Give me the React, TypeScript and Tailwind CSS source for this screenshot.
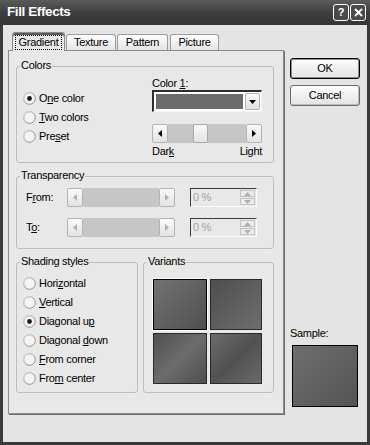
import React from "react";

function Radio({ checked }: { checked?: boolean }) {
  return (
    <svg width="13" height="13" viewBox="0 0 13 13" className="shrink-0">
      <circle cx="6.5" cy="6.5" r="5.8" fill="#f4f4f4" stroke="#939393" strokeWidth="1" />
      <path d="M2.2 9.5 A5 5 0 0 1 9.5 2.2" fill="none" stroke="#d4d4d4" strokeWidth="1.2" />
      {checked && <circle cx="6.5" cy="6.5" r="2.4" fill="#1c1c1c" />}
    </svg>
  );
}

function Tri({ dir, color = "#000" }: { dir: "left" | "right" | "down" | "up"; color?: string }) {
  const pts = {
    left: "4,0 0,3.5 4,7",
    right: "0,0 4,3.5 0,7",
    down: "0,0 7,0 3.5,4",
    up: "0,4 7,4 3.5,0",
  }[dir];
  const w = dir === "left" || dir === "right" ? 4 : 7;
  const h = dir === "left" || dir === "right" ? 7 : 4;
  return (
    <svg width={w} height={h} viewBox={`0 0 ${w} ${h}`}>
      <polygon points={pts} fill={color} />
    </svg>
  );
}

function Group({ label, className, children }: { label: React.ReactNode; className: string; children: React.ReactNode }) {
  return (
    <div className={`relative border border-[#bdbdbd] rounded-[3px] ${className}`}>
      <span className="absolute -top-[8px] left-[3px] px-[1px] bg-[#e8e8e8] leading-[13px]">{label}</span>
      {children}
    </div>
  );
}

function ScrollBtn({ dir, disabled }: { dir: "left" | "right"; disabled?: boolean }) {
  return (
    <div className="w-[16px] h-full shrink-0 flex items-center justify-center bg-gradient-to-b from-[#fbfbfb] to-[#e2e2e2] border border-[#b3b3b3] rounded-[2px]">
      <Tri dir={dir} color={disabled ? "#b0b0b0" : "#000"} />
    </div>
  );
}

function Slider({ disabled, w }: { disabled?: boolean; w: string }) {
  return (
    <div className={`flex h-[19px] ${w}`}>
      <ScrollBtn dir="left" disabled={disabled} />
      <div className="flex-1 bg-[#c6c6c6] flex items-stretch">
        {!disabled && (
          <div className="ml-[25px] w-[15px] bg-gradient-to-b from-[#fafafa] to-[#e4e4e4] border border-[#a9a9a9] rounded-[2px]" />
        )}
      </div>
      <ScrollBtn dir="right" disabled={disabled} />
    </div>
  );
}

function Spin() {
  return (
    <div className="ml-[15px] w-[67px] h-[19px] flex border-t border-l border-[#3c3c3c] border-r border-b border-r-[#fafafa] border-b-[#fafafa] bg-[#e8e8e8]">
      <span className="flex-1 pl-[2px] leading-[17px] text-[#a3a3a3]">0 %</span>
      <div className="w-[16px] flex flex-col gap-[1px] py-[1px] pr-[1px]">
        <div className="flex-1 flex items-center justify-center bg-[#ececec] border border-[#c2c2c2]">
          <Tri dir="up" color="#b0b0b0" />
        </div>
        <div className="flex-1 flex items-center justify-center bg-[#ececec] border border-[#c2c2c2]">
          <Tri dir="down" color="#b0b0b0" />
        </div>
      </div>
    </div>
  );
}

function RadioRow({ checked, children }: { checked?: boolean; children: React.ReactNode }) {
  return (
    <div className="h-[19px] flex items-center gap-[3px]">
      <Radio checked={checked} />
      <span>{children}</span>
    </div>
  );
}

const Tab = ({ children, w, ml }: { children: React.ReactNode; w: string; ml: string }) => (
  <div className={`${w} ${ml} h-[16px] flex items-center justify-center border border-b-0 border-[#9c9c9c] rounded-t-[3px] bg-gradient-to-b from-[#ffffff] to-[#e4e4e4]`}>
    {children}
  </div>
);

export default function App() {
  return (
    <div className="w-[370px] h-[445px] bg-[#3a3a3a] flex flex-col font-['Liberation_Sans',Arial,sans-serif] text-[11px] tracking-[-0.3px] text-black overflow-hidden">
      {/* title bar */}
      <div className="h-[25px] shrink-0 flex items-center pl-[7px] pr-[4px] bg-gradient-to-b from-[#5c5c5c] via-[#3e3e3e] to-[#363636]">
        <span className="text-white font-bold text-[13.5px] tracking-[-0.4px]">Fill Effects</span>
        <div className="ml-auto flex gap-[1px]">
          <div className="w-[16px] h-[17px] flex items-center justify-center border border-white rounded-[3px] bg-[#4a4a4a] text-white font-bold text-[11px]">?</div>
          <div className="w-[16px] h-[17px] flex items-center justify-center border border-white rounded-[3px] bg-[#4a4a4a]">
            <svg width="9" height="9" viewBox="0 0 9 9">
              <path d="M1 1 L8 8 M8 1 L1 8" stroke="#fff" strokeWidth="2" />
            </svg>
          </div>
        </div>
      </div>

      {/* body */}
      <div className="flex-1 mx-[3px] mb-[3px] bg-[#e4e4e4] flex pt-[6px] pl-[5px]">
        <div className="w-[276px] flex flex-col">
          <div className="h-[19px] flex items-end pl-[4px]">
            <div className="relative z-10 -mb-[1px] w-[53px] h-[19px] flex items-center justify-center border border-b-0 border-[#8a8a8a] rounded-t-[3px] bg-[#e8e8e8] shadow-[inset_0_2px_0_#5a5a5a]">
              <span className="px-[3px] leading-[13px] border border-dotted border-black">Gradient</span>
            </div>
            <Tab w="w-[50px]" ml="ml-[1px]">Texture</Tab>
            <Tab w="w-[51px]" ml="ml-[1px]">Pattern</Tab>
            <Tab w="w-[49px]" ml="ml-[2px]">Picture</Tab>
          </div>

          <div className="h-[364px] border border-[#8c8c8c] bg-[#e8e8e8] shadow-[1px_1px_0_#6a6a6a] flex flex-col pt-[15px] pl-[7px] pr-[9px] gap-[13px]">
            <Group label="Colors" className="h-[97px] flex">
              <div className="w-[135px] pl-[6px] pt-[22px] flex flex-col">
                <RadioRow checked>O<u>n</u>e color</RadioRow>
                <RadioRow><u>T</u>wo colors</RadioRow>
                <RadioRow>Pre<u>s</u>et</RadioRow>
              </div>
              <div className="w-[110px] pt-[10px] flex flex-col">
                <span className="leading-[13px]">Color <u>1</u>:</span>
                <div className="h-[22px] flex border-t-2 border-l-2 border-[#2e2e2e] border-r border-b border-r-[#f6f6f6] border-b-[#f6f6f6] bg-white">
                  <div className="flex-1 m-[2px] bg-[#6b6b6b]" />
                  <div className="w-[15px] my-[1px] mr-[1px] flex items-center justify-center bg-gradient-to-b from-[#fafafa] to-[#e0e0e0] border border-[#b3b3b3] rounded-[2px]">
                    <Tri dir="down" />
                  </div>
                </div>
                <div className="mt-[12px]">
                  <Slider w="w-[110px]" />
                </div>
                <div className="mt-[2px] flex justify-between leading-[13px]">
                  <span>Dar<u>k</u></span>
                  <span>Light</span>
                </div>
              </div>
            </Group>

            <Group label="Transparency" className="h-[73px] pt-[11px] pl-[9px] flex flex-col gap-[11px]">
              <div className="flex items-center">
                <span className="w-[41px]">F<u>r</u>om:</span>
                <Slider disabled w="w-[108px]" />
                <Spin />
              </div>
              <div className="flex items-center">
                <span className="w-[41px]">T<u>o</u>:</span>
                <Slider disabled w="w-[108px]" />
                <Spin />
              </div>
            </Group>

            <div className="flex gap-[5px]">
              <Group label="Shading styles" className="w-[122px] h-[131px] pt-[11px] pl-[6px] flex flex-col">
                <RadioRow>Hori<u>z</u>ontal</RadioRow>
                <RadioRow><u>V</u>ertical</RadioRow>
                <RadioRow checked>Diagonal u<u>p</u></RadioRow>
                <RadioRow>Diagonal <u>d</u>own</RadioRow>
                <RadioRow><u>F</u>rom corner</RadioRow>
                <RadioRow>Fro<u>m</u> center</RadioRow>
              </Group>
              <Group label="Variants" className="flex-1 h-[131px] pt-[16px] pl-[9px]">
                <div className="grid grid-cols-[54px_52px] grid-rows-[51px_51px] gap-[3px]">
                  <div className="border border-black shadow-[0_0_0_1px_#ffffff] bg-[linear-gradient(135deg,#727272,#505050)]" />
                  <div className="border border-[#2a2a2a] bg-[linear-gradient(135deg,#4e4e4e,#5e5e5e_50%,#6e6e6e)]" />
                  <div className="border border-[#2a2a2a] bg-[linear-gradient(135deg,#505050,#6c6c6c_50%,#4e4e4e)]" />
                  <div className="border border-[#2a2a2a] bg-[linear-gradient(135deg,#6c6c6c,#515151_50%,#6a6a6a)]" />
                </div>
              </Group>
            </div>
          </div>
        </div>

        {/* right column */}
        <div className="ml-[6px] w-[70px] flex flex-col">
          <div className="mt-[27px] h-[21px] flex items-center justify-center border border-black rounded-[3px] bg-gradient-to-b from-[#fdfdfd] to-[#e3e3e3] shadow-[inset_0_0_0_1px_#8e8e8e]">
            OK
          </div>
          <div className="mt-[6px] h-[21px] flex items-center justify-center border border-[#6a6a6a] rounded-[3px] bg-gradient-to-b from-[#fdfdfd] to-[#e3e3e3] shadow-[inset_-1px_-1px_0_#bcbcbc]">
            Cancel
          </div>
          <span className="mt-[221px] leading-[13px]">Sample:</span>
          <div className="mt-[5px] ml-[2px] w-[66px] h-[62px] border border-black bg-[linear-gradient(135deg,#6e6e6e,#545454)]" />
        </div>
      </div>
    </div>
  );
}
